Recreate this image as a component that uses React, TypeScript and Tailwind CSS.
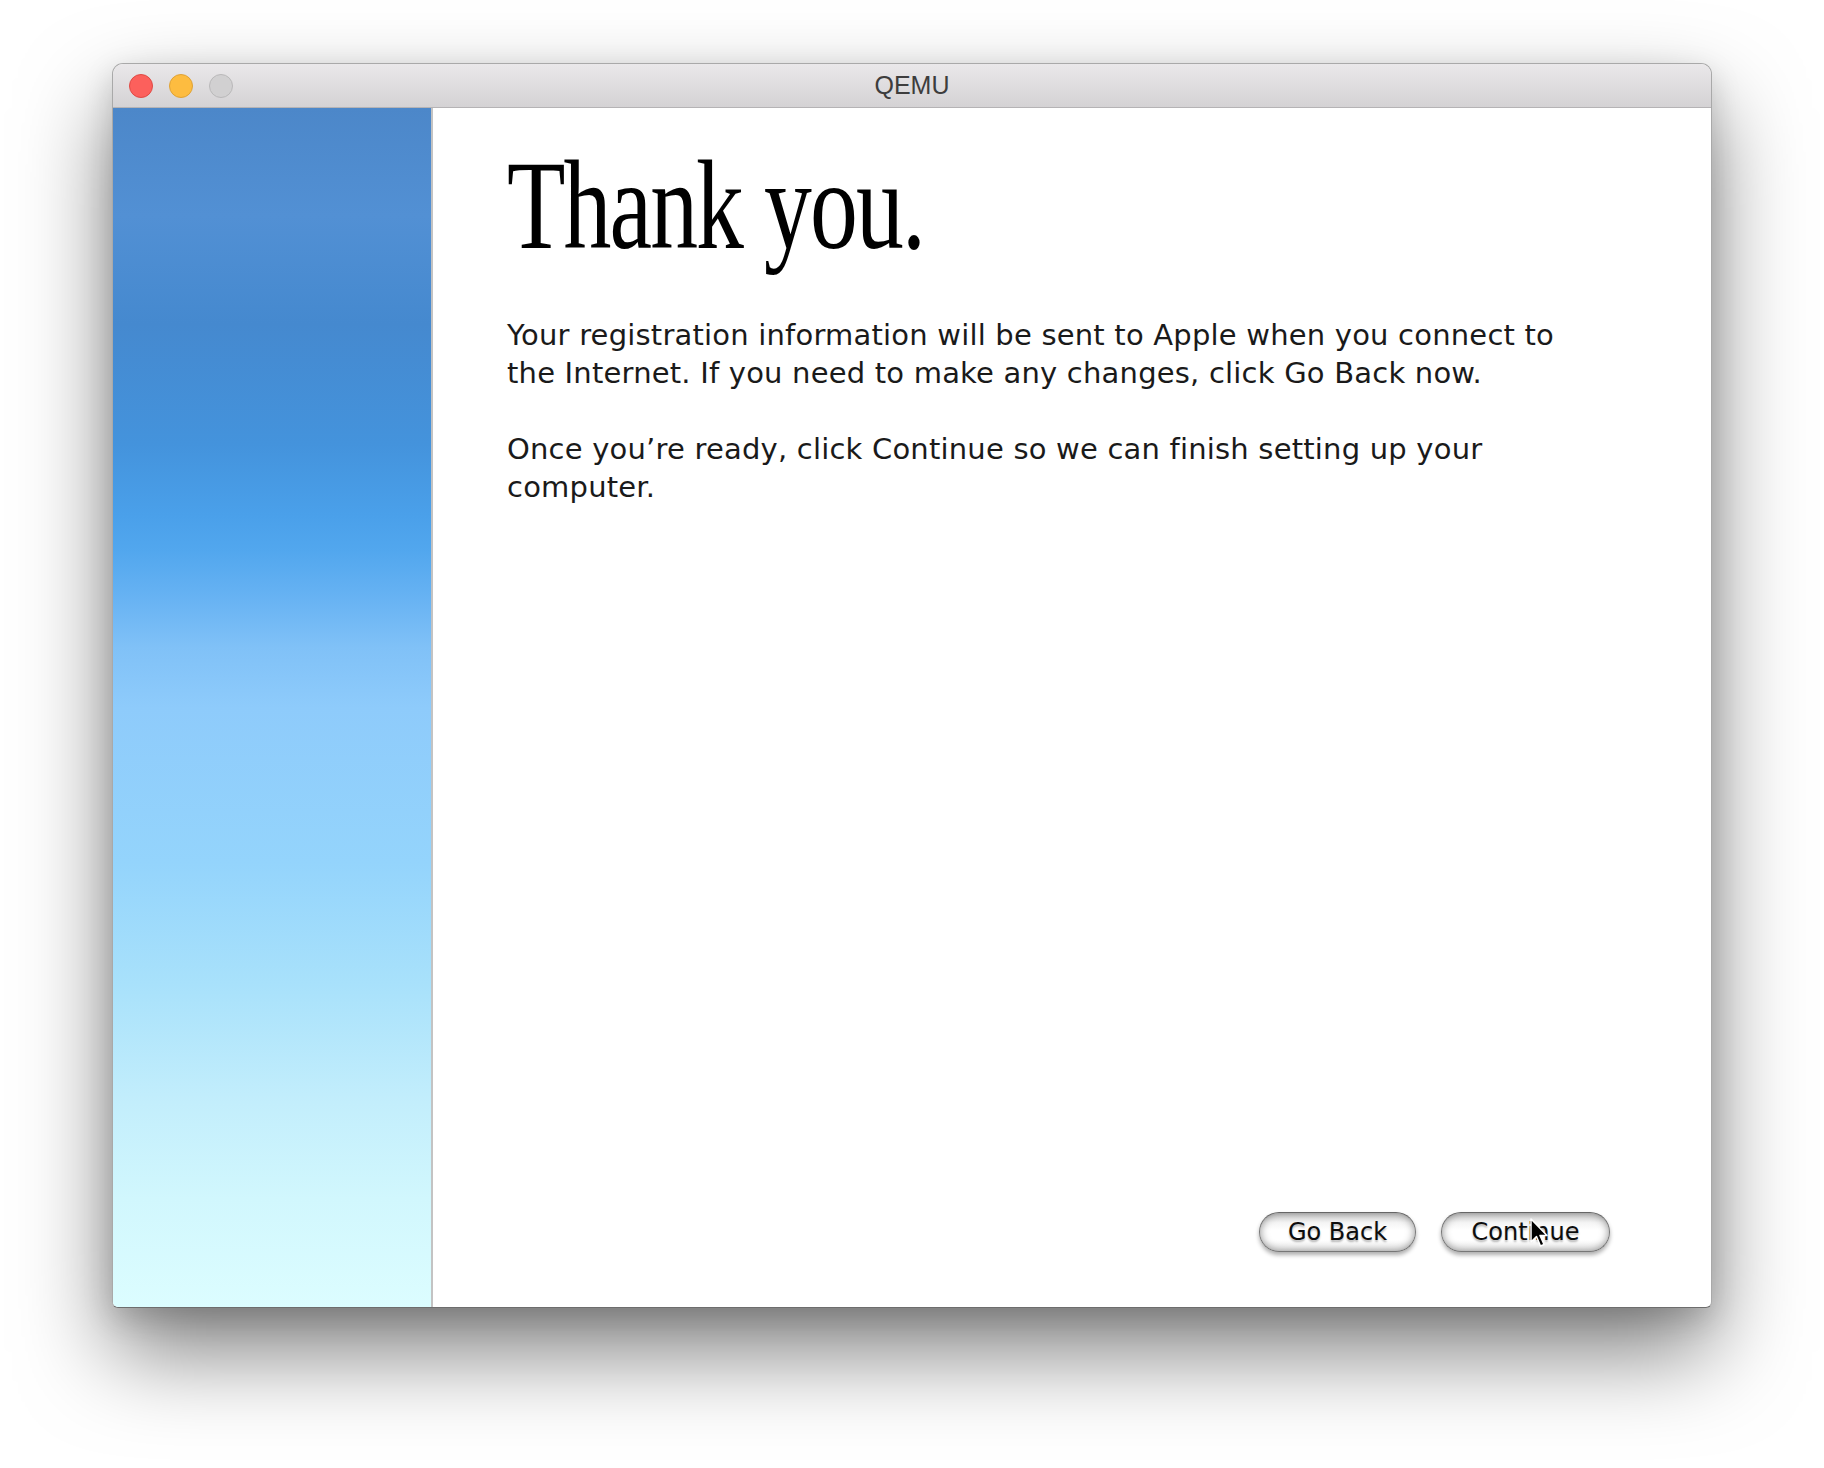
import React from 'react';

const sidebarGradient =
  'bg-[linear-gradient(to_bottom,#4c87c9_0%,#5290d4_9%,#4589cf_18%,#4493dc_28%,#4aa0ea_34%,#52a7ee_37%,#68b3f3_41%,#80c1f7_45%,#8ecbfb_50%,#94d4fc_63%,#a8e1fb_73%,#c3eefc_83%,#d1f7fd_91%,#dcfdff_100%)]';

const TrafficLights: React.FC = () => (
  <div className="absolute left-[16px] top-[10px] flex gap-[16px]">
    <span className="w-[24px] h-[24px] rounded-full bg-[#fc605c] border border-[#de4a45]" />
    <span className="w-[24px] h-[24px] rounded-full bg-[#fdbc40] border border-[#dea236]" />
    <span className="w-[24px] h-[24px] rounded-full bg-[#d1d0d1] border border-[#b9b8b9]" />
  </div>
);

const AquaButton: React.FC<{ label: string; width: string; children?: React.ReactNode }> = ({
  label,
  width,
  children,
}) => (
  <button
    className={`relative ${width} h-[40px] rounded-full border border-[#777] border-t-[#666] bg-[linear-gradient(to_bottom,#d2d2d2_0%,#f4f4f4_25%,#ffffff_45%,#ffffff_70%,#ececec_100%)] shadow-[inset_0_0_9px_rgba(0,0,0,0.42),0_3px_4px_rgba(0,0,0,0.32)] text-[24px] leading-none text-[#0d0d0d] font-['DejaVu_Sans',sans-serif] [text-shadow:0_2px_2px_rgba(0,0,0,0.28)]`}
  >
    {label}
    {children}
  </button>
);

// plain macOS arrow pointer, sitting over the Continue button
const Cursor: React.FC = () => (
  <svg className="absolute left-[88px] top-[5px]" width="18" height="30" viewBox="0 0 18 30">
    <path
      d="M1 1 L1 24 L6.5 18.5 L10.5 28 L14 26.5 L10 17.5 L17 17.5 Z"
      fill="#000"
      stroke="#fff"
      strokeWidth="1.5"
      strokeLinejoin="round"
    />
  </svg>
);

export default function App() {
  return (
    <div className="w-[1824px] h-[1468px] bg-white overflow-hidden pl-[112px] pt-[63px]">
      {/* Window */}
      <div className="w-[1600px] h-[1245px] flex flex-col rounded-t-[11px] rounded-b-[6px] border border-[#a9a9a9] border-b-[#6d6d6d] bg-white shadow-[0_44px_90px_rgba(0,0,0,0.5),0_10px_30px_rgba(0,0,0,0.15)] overflow-hidden">
        {/* Title bar */}
        <div className="relative h-[44px] shrink-0 flex items-center justify-center bg-[linear-gradient(to_bottom,#eae8ea,#d4d2d4)] border-b border-[#b5b3b5]">
          <TrafficLights />
          <span className="text-[25px] text-[#3d3d3d] font-['Liberation_Sans',Arial,sans-serif]">QEMU</span>
        </div>

        {/* Body */}
        <div className="flex flex-1 min-h-0">
          <div className={`w-[320px] shrink-0 ${sidebarGradient} border-r-2 border-[#c3c3c3]`} />

          <div className="flex-1 flex flex-col pl-[74px]">
            <h1 className="pt-[35px] text-[126px] leading-none text-black font-['Liberation_Serif','Times_New_Roman',serif] tracking-[-0.02em] scale-x-[0.76] origin-left whitespace-nowrap">
              Thank you.
            </h1>

            <div className="mt-[47px] w-[1080px] text-[29px] leading-[38px] tracking-[0.2px] text-[#1a1a1a] font-['DejaVu_Sans',sans-serif] space-y-[38px]">
              <p>
                Your registration information will be sent to Apple when you connect to the Internet. If you
                need to make any changes, click Go Back now.
              </p>
              <p>Once you’re ready, click Continue so we can finish setting up your computer.</p>
            </div>

            <div className="mt-auto flex justify-end gap-[25px] pr-[101px] pb-[55px]">
              <AquaButton label="Go Back" width="w-[157px]" />
              <AquaButton label="Continue" width="w-[169px]">
                <Cursor />
              </AquaButton>
            </div>
          </div>
        </div>
      </div>
    </div>
  );
}
